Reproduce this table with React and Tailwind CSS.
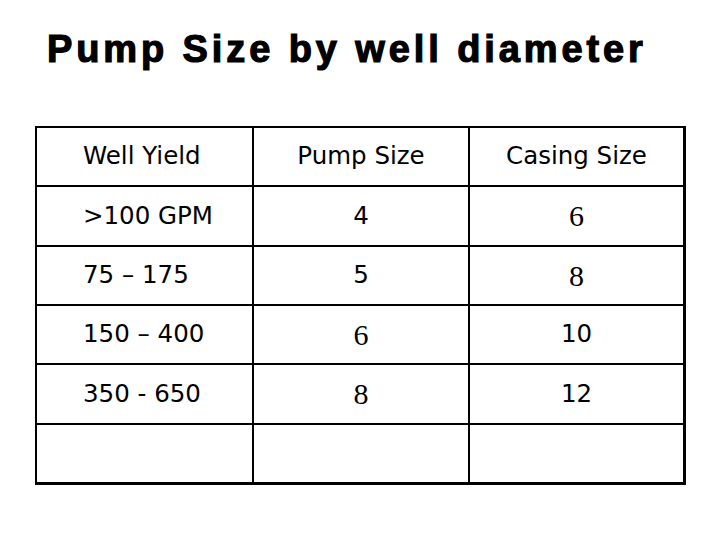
const HEAD = ["Well Yield", "Pump Size", "Casing Size"];

// serif flag marks digits that render in a Times-like face in the original
const ROWS = [
  [{ t: ">100 GPM" }, { t: "4" }, { t: "6", serif: true }],
  [{ t: "75 – 175" }, { t: "5" }, { t: "8", serif: true }],
  [{ t: "150 – 400" }, { t: "6", serif: true }, { t: "10" }],
  [{ t: "350 - 650" }, { t: "8", serif: true }, { t: "12" }],
  [{ t: "" }, { t: "" }, { t: "" }],
];

function Cell({ text, serif, col, last }) {
  const borders = `${col < 2 ? "border-r-2" : ""} ${last ? "" : "border-b-2"} border-black`;
  const align = col === 0 ? "justify-start pl-[46px]" : "justify-center";
  const font = serif
    ? "font-['Liberation_Serif',serif] text-[30px]"
    : "font-['DejaVu_Sans',sans-serif] text-[24.5px]";
  return (
    <div className={`flex items-center ${align} ${borders}`}>
      <span className={`${font} leading-none text-black`}>{text}</span>
    </div>
  );
}

export default function App() {
  return (
    <div className="w-[720px] h-[540px] bg-white overflow-hidden">
      <h1 className="ml-[47px] pt-[30px] font-['Liberation_Sans',Arial,sans-serif] font-bold text-[38px] leading-[38px] tracking-[3.9px] text-black [-webkit-text-stroke:1.2px_black]">
        Pump Size by well diameter
      </h1>

      <div className="ml-[35px] mt-[58px] w-fit grid grid-cols-[217px_216px_213px] grid-rows-[59px_60px_59px_59px_60px_57px] border-l-2 border-t-2 border-r-[3px] border-b-[3px] border-black">
        {HEAD.map((h, i) => (
          <Cell key={h} text={h} col={i} />
        ))}
        {ROWS.map((row, r) =>
          row.map((c, i) => (
            <Cell key={`${r}-${i}`} text={c.t} serif={c.serif} col={i} last={r === ROWS.length - 1} />
          ))
        )}
      </div>
    </div>
  );
}
